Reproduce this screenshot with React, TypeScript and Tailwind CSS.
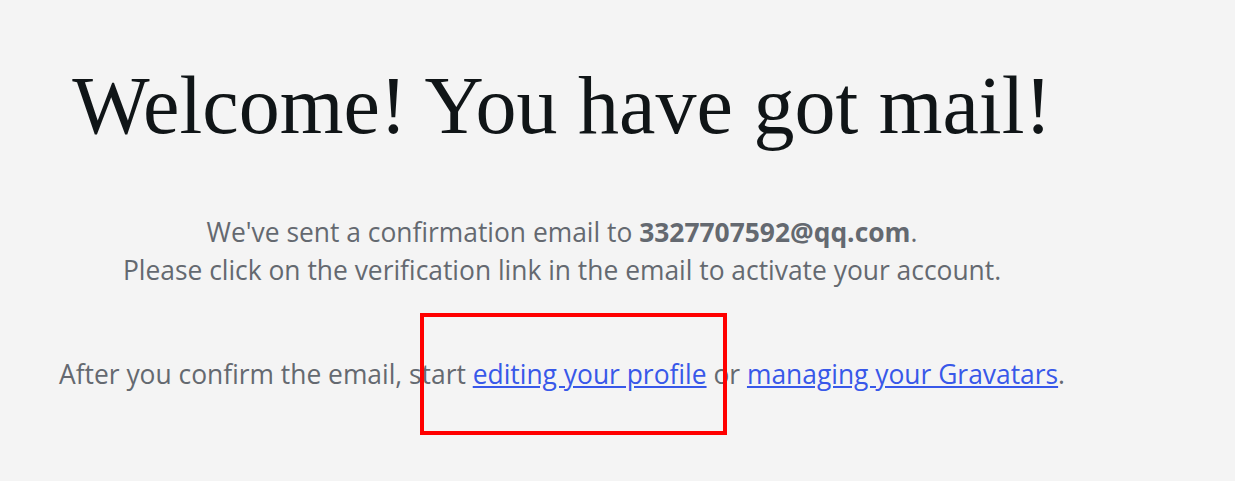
import React from "react";

export default function App() {
  return (
    <div className="relative w-[1235px] h-[481px] bg-[#f4f4f4] overflow-hidden">
      <div className="w-[1124px] text-center">
        <h1 className="pt-[58px] text-[82px] leading-[96px] text-[#101517] font-normal" style={{ fontFamily: '"Liberation Serif", "DejaVu Serif", serif' }}>
          Welcome! You have got mail!
        </h1>
        <div className="mt-[59px] text-[26.4px] leading-[38px] text-[#646970]" style={{ fontFamily: '"Open Sans", "Noto Sans", sans-serif' }}>
          <p>
            We've sent a confirmation email to <strong className="font-bold">3327707592@qq.com</strong>.
          </p>
          <p>Please click on the verification link in the email to activate your account.</p>
          <p className="mt-[66px]">
            After you confirm the email, start{" "}
            <a href="#" className="text-[#3858e9] underline">editing your profile</a> or{" "}
            <a href="#" className="text-[#3858e9] underline">managing your Gravatars</a>.
          </p>
        </div>
      </div>
      <div className="absolute left-[420px] top-[313px] w-[307px] h-[122px] border-4 border-[#ff0000]" />
    </div>
  );
}
